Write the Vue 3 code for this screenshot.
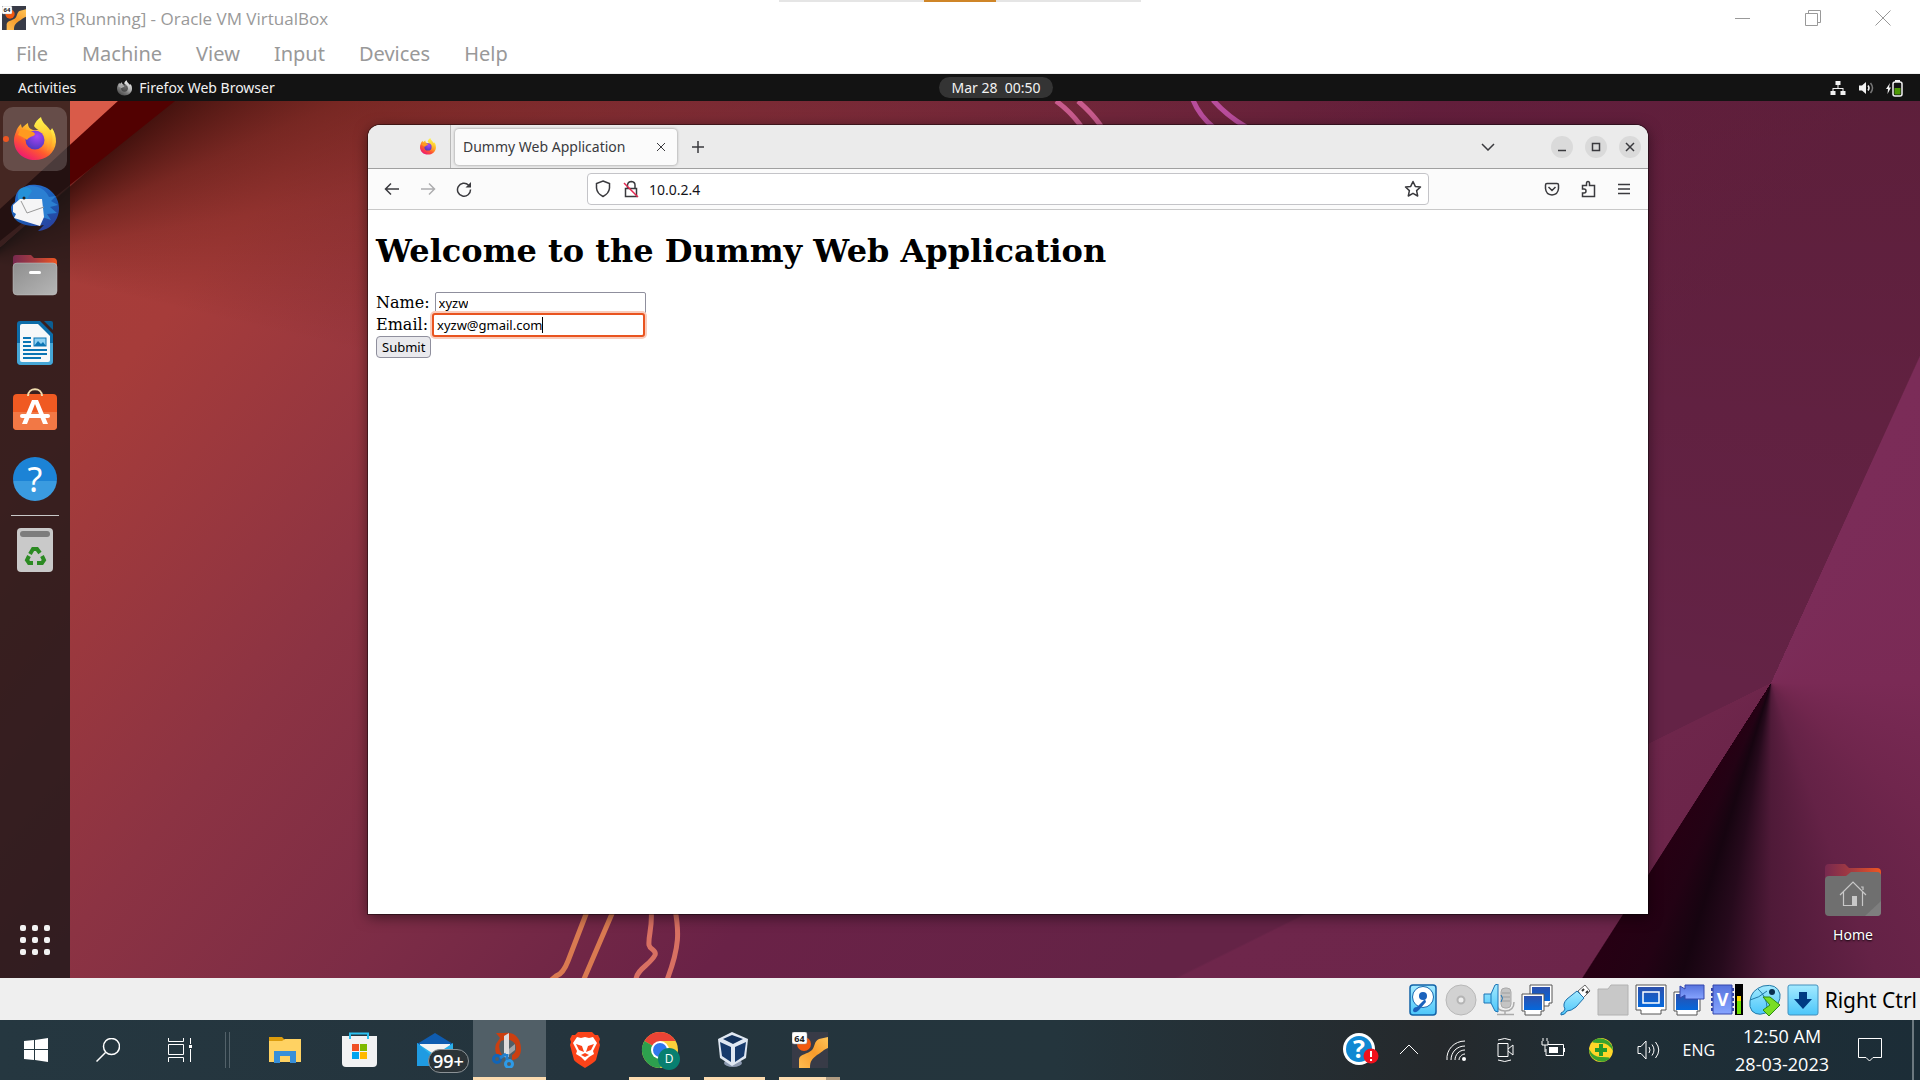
<script setup>
import { ref } from 'vue'

const menus = ['File', 'Machine', 'View', 'Input', 'Devices', 'Help']
const name = ref('xyzw')
const email = ref('xyzw@gmail.com')
const url = ref('10.0.2.4')
</script>

<template>
  <div class="screen">
    <svg class="symbols" aria-hidden="true">
      <defs>
        <linearGradient id="ffBody" x1="0.85" y1="0.1" x2="0.25" y2="0.95">
          <stop offset="0" stop-color="#fff24a" />
          <stop offset="0.35" stop-color="#ffb02a" />
          <stop offset="0.65" stop-color="#ff5a2e" />
          <stop offset="1" stop-color="#ee1a70" />
        </linearGradient>
        <linearGradient id="ffFlame" x1="0.4" y1="0" x2="0.5" y2="1">
          <stop offset="0" stop-color="#fff44f" />
          <stop offset="0.6" stop-color="#ffc830" />
          <stop offset="1" stop-color="#ff8a2a" />
        </linearGradient>
        <radialGradient id="ffGlobe" cx="0.6" cy="0.3" r="0.8">
          <stop offset="0" stop-color="#a645f5" />
          <stop offset="1" stop-color="#4636b8" />
        </radialGradient>
        <linearGradient id="tb" x1="0.2" y1="0" x2="0.8" y2="1">
          <stop offset="0" stop-color="#2d6fd0" />
          <stop offset="0.5" stop-color="#1a5fb8" />
          <stop offset="1" stop-color="#2b3f9c" />
        </linearGradient>
        <linearGradient id="folderBack" x1="0" y1="0" x2="1" y2="0">
          <stop offset="0" stop-color="#77294f" />
          <stop offset="0.5" stop-color="#a83c40" />
          <stop offset="1" stop-color="#ee5622" />
        </linearGradient>
        <linearGradient id="grey" x1="0" y1="0" x2="1" y2="1">
          <stop offset="0" stop-color="#8e8e8e" />
          <stop offset="1" stop-color="#b6b6b6" />
        </linearGradient>
        <linearGradient id="sky" x1="0" y1="0" x2="0" y2="1">
          <stop offset="0" stop-color="#a4eaff" />
          <stop offset="1" stop-color="#4cc6fa" />
        </linearGradient>
        <linearGradient id="deep" x1="0" y1="0" x2="0" y2="1">
          <stop offset="0" stop-color="#2c50ac" />
          <stop offset="1" stop-color="#0468dc" />
        </linearGradient>
        <linearGradient id="violet" x1="0" y1="0" x2="0" y2="1">
          <stop offset="0" stop-color="#5673dd" />
          <stop offset="1" stop-color="#86a4ff" />
        </linearGradient>
        <linearGradient id="amber" x1="1" y1="0" x2="0" y2="1">
          <stop offset="0" stop-color="#ffc558" />
          <stop offset="0.5" stop-color="#f79b2b" />
          <stop offset="1" stop-color="#ffbd52" />
        </linearGradient>
        <symbol id="firefox" viewBox="0 0 42 44">
          <path d="M2 15 C3 11 5 9 7 7 C7 9 8 10 8 11 C10 9 12 7 14 6 C14 10 16 12 19 13 L33 13 C37 15 38 11 38 11 C41 15 42 20 42 25 C41 36 32 43 21 43 C9 43 0 35 0 23 C0 20 1 17 2 15Z" fill="url(#ffBody)" />
          <path d="M20 9 C21 5 24 2 27 0 C28 6 33 8 36 13 C40 19 39 30 33 34 C35 27 34 21 30 16 C27 13 22 13 20 9Z" fill="url(#ffFlame)" />
          <circle cx="21" cy="23" r="9.5" fill="url(#ffGlobe)" />
          <path d="M6 13 C11 12 14 13 19 15 C21 16 22 18 19 19 C16 20 14 21 13 23 C11 21 7 19 4 18Z" fill="#ff9a1f" />
        </symbol>
        <symbol id="vm64" viewBox="0 0 36 36">
          <rect width="36" height="36" fill="#383b47" />
          <circle cx="12" cy="12" r="7" fill="#f2590f" />
          <path d="M36 5 L27 7 C22 9 23 15 20 18 C16 22 8 22 7 27 V36 H18 C18 29 20 27 25 23 C30 20 31 18 36 16Z" fill="url(#amber)" />
          <rect width="15" height="12" rx="2" fill="#fff" stroke="#9a9a9a" stroke-width="0.5" />
          <text x="7.5" y="9.5" font-size="9" font-weight="700" text-anchor="middle" font-family="Open Sans, sans-serif" fill="#222">64</text>
        </symbol>
      </defs>
    </svg>

    <header class="host-title">
      <svg class="app-icon" viewBox="0 0 36 36"><use href="#vm64" /></svg>
      <span class="title-text">vm3 [Running] - Oracle VM VirtualBox</span>
      <div class="win-controls">
        <button aria-label="Minimize"><svg width="16" height="16" viewBox="0 0 16 16"><path d="M0 8.500H15" /></svg></button>
        <button aria-label="Restore"><svg width="16" height="16" viewBox="0 0 16 16"><path d="M.5 3.500H12.500V15.500H.5ZM3.500 3.500V.5H15.500V12.500H12.500" /></svg></button>
        <button aria-label="Close"><svg width="16" height="16" viewBox="0 0 16 16"><path d="M.5 .5L15.500 15.500M15.500 .5L.5 15.500" /></svg></button>
      </div>
      <div class="mini-toolbar"><i></i></div>
    </header>
    <nav class="host-menu">
      <button v-for="m in menus" :key="m">{{ m }}</button>
    </nav>

    <div class="gnome-bar">
      <div class="bar-left">
        <button>Activities</button>
        <button class="bar-app"><svg class="mono" width="15" height="16"><use href="#firefox" /></svg>Firefox Web Browser</button>
      </div>
      <button class="clock">Mar 28&nbsp; 00:50</button>
      <div class="bar-right">
        <svg width="16" height="16" viewBox="0 0 16 16" fill="#f2f2f2"><path d="M5.500 1h5v4h-2v3h5v3h2v4h-5v-4h2v-2h-9v2h2v4h-5v-4h2V8h5V5h-2z" /></svg>
        <svg width="16" height="16" viewBox="0 0 16 16"><path d="M1 5.500h3L8 2v12l-4-3.500H1z" fill="#f2f2f2" /><path d="M10 5.500q2 2.500 0 5" fill="none" stroke="#f2f2f2" stroke-width="1.500" /><path d="M12.500 3q4 5 0 10" fill="none" stroke="#777" stroke-width="1.500" /></svg>
        <svg width="18" height="18" viewBox="0 0 18 18"><path d="M4 4L0 10h2l-.5 5L5 8.500H3z" fill="#f2f2f2" /><rect x="7" y="3" width="9" height="14" rx="2" fill="none" stroke="#f2f2f2" stroke-width="1.500" /><path d="M9 1h5v2H9z" fill="#f2f2f2" /><path d="M8.500 9h6v6.500h-6z" fill="#4e9a06" /></svg>
      </div>
    </div>

    <main class="desktop">
      <svg class="wallpaper" viewBox="0 0 1920 877" preserveAspectRatio="none" aria-hidden="true">
        <path d="M0 0H118L0 108Z" fill="#d95b49" />
        <path d="M118 0H175L0 140V108Z" fill="#520101" />
        <g fill="none" stroke-width="5">
          <path d="M1056 0Q1070 10 1081 25M1078 0Q1092 12 1101 25" stroke="#c85b8d" />
          <path d="M1193 -1Q1199 14 1213 26M1213 -1Q1226 14 1246 26" stroke="#b84d9c" />
          <path d="M588 808L568 860Q563 873 556 875L550 880M614 808L584 878" stroke="#d97a51" />
          <path d="M651 808C653 825 648 835 649 844C650 849 657 849 655 854C650 864 637 868 636 878M675 808C679 830 680 845 667 879" stroke="#d87062" />
        </g>
      </svg>
      <aside class="dock">
        <button class="dock-item running" aria-label="Firefox"><svg width="42" height="44"><use href="#firefox" /></svg></button>
        <button class="dock-item" aria-label="Thunderbird">
          <svg width="48" height="48" viewBox="0 -1 48 48">
            <path d="M8 6C14 2 18 0 26 1C38 2 48 12 48 24C48 36 40 46 27 47L33 41C20 44 9 40 5 36C1 32 0 27 0 23C1 20 3 19 4 18C4 12 6 8 8 6Z" fill="url(#tb)" />
            <path d="M14 3C22 0 34 3 38 13L45 12L40 17L47 21L39 23L46 29L36 30L40 36L31 33L30 16L12 16Z" fill="#2b7fd2" />
            <path d="M9 5C14 2 19 3 21 7L16 15L9 21C6 15 6 9 9 5Z" fill="#2491d8" />
            <path d="M2 21L9 15L31 15L33 33L29 42L3 34L5 30L2 28Z" fill="#f5f5f6" />
            <path d="M10 17L16 29L33 23" fill="none" stroke="#999" />
            <circle cx="13" cy="14" r="1.500" fill="#222" />
          </svg>
        </button>
        <button class="dock-item" aria-label="Files">
          <svg width="46" height="42" viewBox="0 0 46 42">
            <path d="M1 10V4Q1 1 4 1H19L22 4H41Q45 4 45 8V14H1Z" fill="url(#folderBack)" />
            <rect x="1" y="9" width="44" height="32" rx="4" fill="url(#grey)" stroke="#c4c4c4" stroke-width="0.5" />
            <rect x="17" y="17" width="12" height="3" rx="1.500" fill="#fff" />
          </svg>
        </button>
        <button class="dock-item" aria-label="Writer">
          <svg width="36" height="46" viewBox="0 0 36 46">
            <path d="M3 1H23L36 14V41Q36 45 32 45H4Q0 45 0 41V4Q0 1 3 1Z" fill="#0d6ca8" />
            <path d="M0 23H36V41Q36 45 32 45H4Q0 45 0 41Z" fill="#46a6d6" />
            <path d="M3 6Q3 4 5 4H21L33 16V40Q33 42 31 42H5Q3 42 3 40Z" fill="#f7f8f9" />
            <path d="M27 1H34Q36 1 36 3V10Z" fill="#0c5d92" />
            <path d="M6 18H14M6 22H14M6 26H14M6 30H30M6 34H30M6 38H24" stroke="#0c75b4" stroke-width="2" />
            <rect x="17" y="18" width="12" height="8" fill="#8fd0f2" stroke="#0c75b4" />
            <path d="M17 26L21 21L24 24L26 22L29 26Z" fill="#0c75b4" />
          </svg>
        </button>
        <button class="dock-item" aria-label="Ubuntu Software">
          <svg width="46" height="46" viewBox="0 2 46 46">
            <rect x="1" y="8" width="44" height="36" rx="4" fill="#f05a22" />
            <path d="M1 26H45V40Q45 44 41 44H5Q1 44 1 40Z" fill="#f27845" />
            <path d="M16 10C16 1 30 1 30 10" fill="none" stroke="#f0dcae" stroke-width="2" />
            <path d="M10 30H36" stroke="#fff" stroke-width="4" stroke-linecap="round" />
            <path d="M10 38L20 14H26L36 38H31L23 18L15 38Z" fill="#fff" />
          </svg>
        </button>
        <button class="dock-item help" aria-label="Help"><span>?</span></button>
        <hr class="dock-rule" />
        <button class="dock-item trash" aria-label="Trash">
          <svg width="36" height="46" viewBox="0 0 36 46">
            <rect y="1" width="36" height="44" rx="4" fill="#c9c9c9" />
            <rect x="3" y="4" width="30" height="6" rx="3" fill="#7d7d7d" />
            <g fill="none" stroke="#2b8a22" stroke-width="4">
              <path d="M13 27L16 22H20L23 26" /><path d="M25 29L27 33L25 36H20" /><path d="M16 36H12L10 33L12 29" />
            </g>
          </svg>
        </button>
        <button class="app-grid" aria-label="Show Applications"><i v-for="n in 9" :key="n"></i></button>
      </aside>

      <section class="browser">
        <div class="tabs">
          <div class="pinned"><svg width="16" height="17"><use href="#firefox" /></svg></div>
          <div class="tab">
            <span>Dummy Web Application</span>
            <button aria-label="Close tab"><svg width="10" height="10" viewBox="0 0 10 10"><path d="M1 1L9 9M9 1L1 9" /></svg></button>
          </div>
          <button class="new-tab" aria-label="New tab"><svg width="14" height="14" viewBox="0 0 14 14"><path d="M7 1V13M1 7H13" /></svg></button>
          <button class="list-tabs" aria-label="List all tabs"><svg width="14" height="8" viewBox="0 0 14 8"><path d="M1 1L7 7L13 1" /></svg></button>
          <div class="circles">
            <button aria-label="Minimize"><svg width="10" height="10" viewBox="0 0 10 10"><path d="M1 8.500H9" /></svg></button>
            <button aria-label="Maximize"><svg width="10" height="10" viewBox="0 0 10 10"><path d="M1.500 1.500H8.500V8.500H1.500Z" /></svg></button>
            <button aria-label="Close"><svg width="10" height="10" viewBox="0 0 10 10"><path d="M1 1L9 9M9 1L1 9" /></svg></button>
          </div>
        </div>
        <div class="toolbar">
          <div class="nav">
            <button aria-label="Back"><svg width="16" height="16" viewBox="0 0 16 16"><path d="M15 8H1.500M7 2.500L1.500 8L7 13.500" /></svg></button>
            <button aria-label="Forward" class="off"><svg width="16" height="16" viewBox="0 0 16 16"><path d="M1 8H14.500M9 2.500L14.500 8L9 13.500" /></svg></button>
            <button aria-label="Reload"><svg width="16" height="16" viewBox="0 0 16 16"><path d="M14.500 8.500A6.500 6.500 0 1 1 12.500 4" /><path d="M15 1V6.500H9.500Z" fill="#3a3a3e" stroke="none" /></svg></button>
          </div>
          <div class="url-box">
            <svg width="16" height="18" viewBox="0 0 16 18"><path d="M8 1L14.500 3.500V8Q14 13.500 8 16.500Q2 13.500 1.500 8V3.500Z" /></svg>
            <svg width="16" height="18" viewBox="0 0 16 18"><path d="M2.500 8.500H13.500V16.500H2.500ZM4.500 8V5Q5 1.500 8.500 1.500Q12 2 12 5V8" /><path d="M1 3L15 17" stroke="#e22850" /></svg>
            <input v-model="url" aria-label="Address" />
            <svg width="18" height="18" viewBox="0 0 18 18"><path d="M9 1.500L11.300 6.400L16.500 7L12.600 10.600L13.700 16L9 13.300L4.300 16L5.400 10.600L1.500 7L6.700 6.400Z" stroke-linejoin="round" /></svg>
          </div>
          <div class="tools">
            <button aria-label="Pocket"><svg width="16" height="16" viewBox="0 0 16 16"><path d="M3 2.500H13Q14.500 2.500 14.500 4V7.500Q14 13.500 8 14Q2 13.500 1.500 7.500V4Q1.500 2.500 3 2.500ZM4.500 6L8 9.500L11.500 6" /></svg></button>
            <button aria-label="Extensions"><svg width="16" height="18" viewBox="0 0 16 18"><path d="M2.500 5.500H6.500V3.500Q6.500 1.500 8 1.500Q9.500 1.500 9.500 3.500V5.500H14.500V16.500H2.500V13H4Q6 13 6 11Q6 9 4 9H2.500Z" /></svg></button>
            <button aria-label="Menu"><svg width="16" height="12" viewBox="0 0 16 12"><path d="M2 1.500H14M2 6H14M2 10.500H14" /></svg></button>
          </div>
        </div>
        <div class="page">
          <h1>Welcome to the Dummy Web Application</h1>
          <form @submit.prevent>
            <div class="row"><label for="name">Name:</label><span class="field"><input id="name" v-model="name" /></span></div>
            <div class="row"><label for="email">Email:</label><span class="field focus"><input id="email" v-model="email" /><i class="caret"></i></span></div>
            <button class="submit">Submit</button>
          </form>
        </div>
      </section>

      <button class="home">
        <svg width="56" height="52" viewBox="0 0 56 52">
          <path d="M0 12V4Q0 0 4 0H20L24 4H52Q56 4 56 8V16H0Z" fill="url(#folderBack)" />
          <path d="M0 16Q0 12 4 12H21L26 8H52Q56 8 56 12V48Q56 52 52 52H4Q0 52 0 48Z" fill="#6f6f6f" />
          <path d="M56 37V48Q56 52 52 52H40Z" fill="#7e7e7e" />
          <path d="M15 31L28 18L41 31M18.500 28V41.500H27M37.500 28V42M36 23H38V26" fill="none" stroke="#c8c8c8" stroke-width="1.200" />
          <path d="M27 32H32V42H27Z" fill="#c8c8c8" />
        </svg>
        <span>Home</span>
      </button>
    </main>

    <footer class="vm-status">
      <svg viewBox="0 0 32 32"><rect x="3" y="1" width="26" height="30" rx="3" fill="url(#sky)" stroke="#1263a8" stroke-width="1.500" /><circle cx="16" cy="13" r="10.500" fill="#fff" stroke="#1769b0" /><circle cx="16" cy="12" r="4" fill="#1b62bc" /><path d="M6 27Q6 23 10 23L18 15L19 18L12 26Q8 30 6 27Z" fill="#1b62bc" /></svg>
      <svg viewBox="0 0 32 32"><circle cx="16" cy="16" r="15" fill="#d2d2d2" stroke="#b8b8b8" /><circle cx="16" cy="16" r="3.500" fill="#eee" stroke="#b4b4b4" stroke-width="2" /></svg>
      <svg viewBox="0 0 32 32"><rect x="18" y="4" width="10" height="20" rx="4" fill="#c4c4c4" stroke="#aaa" /><path d="M14 20Q14 27 22 27Q31 27 31 18M22 27V30M14 30.500H31M19 9H27M19 13H27M19 17H27" stroke="#aaa" stroke-width="1.500" fill="none" /><path d="M1 10H8L12 1L15 0V28L12 27L8 19H1Z" fill="url(#sky)" stroke="#1c74b6" /><path d="M8 10V19M18 11Q21 14 18 18" fill="none" stroke="#1c74b6" /></svg>
      <svg viewBox="0 0 32 32"><path d="M9 1H31V19H28V22H12V19H9Z" fill="#fff" stroke="#555" /><rect x="11" y="3" width="18" height="14" fill="url(#deep)" /><path d="M1 10H23V27H20V31H4V27H1Z" fill="#fff" stroke="#555" /><rect x="3" y="12" width="18" height="14" fill="url(#deep)" /></svg>
      <svg viewBox="0 0 32 32"><path d="M19 7L26 1L31 7L24 14Z" fill="#fff" stroke="#666" /><path d="M23 7L25 5M27 9L29 7" stroke="#333" stroke-width="2" /><path d="M2 29Q5 28 6 25Q3 20 8 15L18 7L25 14L17 23Q12 27 8 27Q6 31 2 31Z" fill="url(#sky)" stroke="#1c6eaa" /></svg>
      <svg viewBox="0 0 32 32"><path d="M1 5H11L14 1H31V31H1Z" fill="#c8c8c8" stroke="#b2b2b2" /></svg>
      <svg viewBox="0 0 32 32"><path d="M1 1H31V26H26V30H6V26H1Z" fill="#fff" stroke="#555" /><rect x="3" y="3" width="26" height="20" fill="url(#deep)" /><rect x="8" y="8" width="16" height="11" fill="none" stroke="#fff" stroke-width="1.500" /></svg>
      <svg viewBox="0 0 32 32"><path d="M1 8H27V27H24V31H4V27H1Z" fill="#fff" stroke="#555" /><rect x="3" y="10" width="22" height="16" fill="url(#deep)" /><path d="M12 1H31V15H12V11L7 14V2L12 5Z" fill="url(#violet)" stroke="#3446ac" /></svg>
      <svg viewBox="0 0 32 32"><path d="M2 1H21V30H2Z" fill="url(#violet)" stroke="#3446ac" /><path d="M1 4V29M22 4V29" stroke="#3446ac" stroke-width="2" stroke-dasharray="3 2" /><text x="11.500" y="22" text-anchor="middle" font-size="18" font-weight="700" font-family="Open Sans, sans-serif" fill="#fff">V</text><rect x="25" y="1" width="6" height="29" fill="#000" stroke="#000" stroke-width="2" /><rect x="26" y="12" width="4" height="9" fill="#ffd800" /><rect x="26" y="17" width="4" height="13" fill="#6de000" /></svg>
      <svg viewBox="0 0 32 32"><path d="M1 17Q2 6 14 2Q28 -1 31 10Q32 20 22 26Q10 34 3 27Q0 23 1 17Z" fill="url(#sky)" stroke="#2379a8" /><path d="M9 5Q18 13 18 24M1 16Q10 14 18 7" fill="none" stroke="#2379a8" /><circle cx="23" cy="8" r="3" fill="#0a3050" /><path d="M14 13H21L31 21L20 32L14 26L21 21Z" fill="#7ade25" stroke="#2c8b14" /></svg>
      <svg viewBox="0 0 32 32"><rect x="1" y="1" width="30" height="30" rx="2" fill="url(#sky)" stroke="#4390bd" /><path d="M12 8H20V15H25L16 25L7 15H12Z" fill="#003b83" /></svg>
      <span>Right Ctrl</span>
    </footer>

    <footer class="taskbar">
      <div class="system-buttons">
        <button aria-label="Start"><svg width="24" height="24" viewBox="0 0 24 24" fill="#fff"><path d="M0 3L10 2V11H0ZM11 2L24 0V11H11ZM0 12H10V22L0 21ZM11 12H24V24L11 22Z" /></svg></button>
        <button aria-label="Search"><svg width="24" height="24" viewBox="0 0 24 24" fill="none" stroke="#fff" stroke-width="1.500"><circle cx="15.500" cy="8.500" r="8" /><path d="M9.500 14.500L.5 23.500" /></svg></button>
        <button aria-label="Task View"><svg width="24" height="24" viewBox="0 0 24 24" fill="none" stroke="#fff"><path d="M.5 0V3.500H15.500V0M.5 6.500H15.500V16.500H.5ZM.5 24V19.500H15.500V24M22.500 0V6M22.500 11V24" /><path d="M21 7H24V10H21Z" fill="#fff" stroke="none" /></svg></button>
      </div>
      <div class="grip"></div>
      <div class="apps">
        <button aria-label="File Explorer"><svg width="32" height="28" viewBox="0 0 32 28"><path d="M0 6V1H13L16 4H32V26H0Z" fill="#dc9c0c" /><path d="M0 5H13L16 3H32V26H0Z" fill="#ffd262" /><path d="M5 27V15H27V27H21V20H11V27Z" fill="#388fd8" /></svg></button>
        <button aria-label="Microsoft Store"><svg width="36" height="36" viewBox="1 0 36 36"><path d="M9 7V1.500H27V7" fill="none" stroke="#2bc0ef" stroke-width="2" /><path d="M1 4H36V31Q36 35 32 35H5Q1 35 1 31Z" fill="#f2f2f3" /><path d="M9 7V4M27 7V4" stroke="#2bc0ef" stroke-width="2" /><path d="M11 12H18V19H11Z" fill="#f04f24" /><path d="M19 12H26V19H19Z" fill="#7fba00" /><path d="M11 20H18V27H11Z" fill="#00a3ef" /><path d="M19 20H26V27H19Z" fill="#ffb900" /></svg></button>
        <button class="mail" aria-label="Mail"><svg width="36" height="36" viewBox="0 0 36 36"><path d="M0 12L18 1L36 12V20H0Z" fill="#0f5cb0" /><path d="M3 12H33V24H3Z" fill="#f4f4f4" /><path d="M0 11L18 23L36 11V34H0Z" fill="#2bb0ea" /><path d="M0 11L26 34H0Z" fill="#1f9be2" /></svg><span class="badge">99+</span></button>
        <button class="active" aria-label="Snip"><svg width="36" height="36" viewBox="0 0 36 36"><path d="M4 1H12C22 -1 29 6 29 17C29 24 25 28 20 28V23C24 21 25 16 23 12C20 7 14 7 9 9Q5 15 10 23H5Q2 18 4 12L8 6Z" fill="#cb3f10" /><path d="M23 12V18L13 26L12 21Z" fill="#9fa4a8" /><path d="M12 4L17 1V25H12Z" fill="#dcdcde" /><g fill="none" stroke-width="3"><circle cx="5" cy="27" r="3.500" stroke="#1165b8" /><circle cx="17" cy="32" r="3.500" stroke="#2d9be8" /><path d="M8 26L14 22M15 22V28" stroke="#2080d0" /></g></svg></button>
        <button aria-label="Brave"><svg width="32" height="36" viewBox="0 0 32 36"><path d="M9 0H23L26 3L29 3L31 7L30 10L31 13L27 28Q26 30 16 36Q6 30 5 28L1 13L2 10L1 7L3 3L6 3Z" fill="#fb4319" /><path d="M8 5L12 6L16 5L20 6L24 5L28 11L24 19L25 22L20 25L16 29L12 25L7 22L8 19L4 11Z" fill="#fff" /><path d="M7 12L13 14L15 20L10 18ZM25 12L19 14L17 20L22 18ZM12 23L16 21L20 23L16 25Z" fill="#fb4319" /></svg></button>
        <button class="open" aria-label="Chrome"><svg width="40" height="40" viewBox="0 0 40 40"><circle cx="20" cy="20" r="18" fill="#fdd13b" /><path d="M20 20L4.400 11A18 18 0 0 1 35.600 11H20Z" fill="#ea4335" /><path d="M20 20L4.400 11A18 18 0 0 0 20 38L27 24Z" fill="#2da04e" /><circle cx="20" cy="20" r="9" fill="#fff" /><circle cx="20" cy="20" r="7" fill="#2f78ed" /><circle cx="29" cy="29" r="11" fill="#087f70" /><text x="29" y="33" font-size="12" text-anchor="middle" font-family="Open Sans, sans-serif" fill="#fff">D</text></svg></button>
        <button class="open" aria-label="VirtualBox"><svg width="36" height="36" viewBox="0 0 36 36"><ellipse cx="16" cy="31" rx="9" ry="4" fill="#8d9ab0" /><path d="M1 7L15 0L31 7L29 26L15 34L3 26Z" fill="#dfe7f2" /><path d="M6 7L15 3L26 7L16 12Z" fill="#12315c" /><path d="M3 10L14 15V30L5 24ZM29 10L18 15V30L27 24Z" fill="#173a6c" /></svg></button>
        <button class="open stacked" aria-label="vm3"><svg width="36" height="36"><use href="#vm64" /></svg></button>
      </div>
      <div class="tray">
        <svg class="help-tray" width="36" height="36" viewBox="0 0 36 36"><circle cx="16" cy="17" r="16" fill="#fff" /><circle cx="16" cy="17" r="13" fill="#1088d2" /><text x="16" y="26" font-size="25" font-weight="700" text-anchor="middle" font-family="Open Sans, sans-serif" fill="#fff">?</text><circle cx="28" cy="24" r="7.500" fill="#f0101c" /><path d="M28 19V25M28 27V29" stroke="#fff" stroke-width="2" /></svg>
        <svg viewBox="0 0 24 24"><path d="M3 16L12 7L21 16" /></svg>
        <svg viewBox="0 0 24 24"><path d="M2 22C1 12 9 3 20 3M6 22C6 14 12 8 20 8M10 22C10 17 14 12 20 12M14 22C14 19 17 16 20 16" /><circle cx="19" cy="21" r="2" fill="#fff" stroke="none" /></svg>
        <svg viewBox="0 0 24 24"><path d="M5 5.500H15V18.500H5ZM15 11L20 7V17L15 13M5 2Q12 -1 18 2M5 22Q12 25 18 22" /></svg>
        <svg viewBox="0 0 24 24"><path d="M7 6.500H22.500V17.500H5V11M23.500 10V14M1 3V7H7V3M2 0V3M6 0V3M4 7V14" /><path d="M8 9H17V15H8Z" fill="#fff" stroke="none" /></svg>
        <svg viewBox="0 0 24 24"><circle cx="12" cy="12" r="12" fill="#ffd629" stroke="none" /><path d="M3 4Q10 -3 19 3Q24 7 24 13Q19 4 11 5Q5 5 3 4ZM21 20Q14 27 5 21Q0 17 0 11Q5 20 13 19Q19 19 21 20Z" fill="#3ba32e" stroke="none" /><path d="M12 6V18M6 12H18" stroke="#259a2b" stroke-width="4" /></svg>
        <svg viewBox="0 0 24 24"><path d="M1 8.500H4L9 3V21L4 15.500H1ZM12 9Q14 12 12 15M15 6.500Q19 12 15 17.500M18.500 4Q25 12 18.500 20" /></svg>
        <span class="lang">ENG</span>
        <div class="datetime"><span>12:50 AM</span><span>28-03-2023</span></div>
        <svg class="notif" viewBox="0 0 24 24"><path d="M.5 .5H23.500V19.500H15L11.500 23L8 19.500H.5Z" /></svg>
        <i class="peek"></i>
      </div>
    </footer>
  </div>
</template>

<style>
body { margin: 0; background: #fff; }
</style>

<style scoped>
* { box-sizing: border-box; }
.screen { min-height: 100vh; display: flex; flex-direction: column; overflow: hidden; font-family: "Noto Sans", sans-serif; }
.symbols { position: absolute; width: 0; height: 0; }
button { border: 0; padding: 0; margin: 0; background: none; font: inherit; color: inherit; display: flex; align-items: center; justify-content: center; }
svg { flex: none; display: block; }

.host-title { position: relative; height: 36px; display: flex; align-items: center; gap: 5px; padding-left: 2px; color: #999; font-family: "Open Sans", sans-serif; font-size: 17px; }
.app-icon { width: 24px; height: 24px; }
.win-controls { margin-left: auto; margin-right: 2px; display: flex; }
.win-controls button { width: 70px; height: 34px; }
.win-controls svg { fill: none; stroke: #999; }
.mini-toolbar { position: absolute; top: 0; left: calc(41% - 8px); width: 362px; height: 2px; background: #e5e5e5; display: flex; justify-content: center; }
.mini-toolbar i { width: 72px; background: #cf8528; }
.host-menu { height: 38px; display: flex; align-items: center; gap: 34px; padding: 0 0 2px 16px; color: #999; font-size: 20px; border-bottom: 1px solid #f0f0f0; }

.gnome-bar { height: 27px; display: grid; grid-template-columns: 1fr auto 1fr; align-items: center; padding: 0 16px 0 18px; background: #131313; color: #f2f2f2; font-size: 14px; }
.bar-left { display: flex; gap: 41px; }
.bar-app { gap: 7px; }
.mono { filter: grayscale(1); }
.clock { height: 21px; padding: 0 12px; border-radius: 11px; background: #343434; margin-left: 70px; }
.bar-right { display: flex; justify-content: flex-end; align-items: center; gap: 12px; }

.desktop { flex: 1; position: relative; display: flex;
  background:
    conic-gradient(from 0deg at 92.24% 66.36%, transparent 24.4deg, #7b2c58 24.6deg, #7a2a55 90deg, #70264d 130deg, #642246 160deg, #4f1a38 180deg, #260a1c 190deg, #160410 197deg, #230214 204deg, #260013 212.5deg, #6c254a 212.7deg, #6e264b 243.500deg, transparent 243.700deg),
    conic-gradient(from 0deg at -15px 160px, transparent 48deg, rgba(36, 4, 0, 0.76) 49deg, rgba(50, 8, 0, 0.4) 66deg, rgba(60, 10, 0, 0.2) 80deg, transparent 104deg),
    linear-gradient(130deg, #a83d37 0%, #a63c3a 13%, #8c3343 29%, #7c2c46 41%, #702646 49%, #6a2247 54%, #642346 71%, #642346 100%);
}
.wallpaper { position: absolute; inset: 0; width: 100%; height: 100%; }
.dock { position: relative; width: 70px; background: rgba(22, 22, 22, 0.76); display: flex; flex-direction: column; align-items: center; padding: 6px 0 20px; }
.dock-item { position: relative; width: 64px; height: 64px; margin-bottom: 4px; border-radius: 10px; }
.running { background: rgba(255, 255, 255, 0.18); }
.running::before { content: ""; position: absolute; left: 0; top: 29px; width: 6px; height: 6px; border-radius: 50%; background: #ee5622; }
.help span { width: 44px; height: 44px; border-radius: 50%; background: linear-gradient(#1c83d6 54%, #3a9be0 54%); color: #fff; font-size: 34px; line-height: 44px; }
.dock-rule { width: 48px; height: 1px; border: 0; margin: 0; background: #c8c8c8; }
.trash { margin-top: 2px; }
.app-grid { margin-top: auto; display: grid; grid-template-columns: repeat(3, 6px); gap: 6px; padding: 3px; }
.app-grid i { width: 6px; height: 6px; border-radius: 2px; background: #f2f2f2; }

.browser { position: absolute; left: 368px; right: 272px; top: 24px; bottom: 64px; display: flex; flex-direction: column; background: #fff; border-radius: 12px 12px 0 0; box-shadow: 0 0 0 1px rgba(0, 0, 0, 0.4), 0 3px 14px rgba(0, 0, 0, 0.5); overflow: hidden; }
.browser svg { fill: none; stroke: #3a3a3e; stroke-width: 1.500px; }
.tabs { height: 44px; display: flex; align-items: center; background: #ebebeb; border-bottom: 1px solid #a0a0a0; }
.pinned { width: 83px; height: 43px; border-right: 1px solid #b8b8b8; display: flex; align-items: center; justify-content: flex-end; padding-right: 14px; }
.pinned svg { stroke: none; }
.tab { width: 222px; height: 36px; margin: 0 14px 0 4px; padding: 0 11px 0 8px; border-radius: 4px; background: #fbfbfb; box-shadow: 0 0 3px rgba(0, 0, 0, 0.4); display: flex; align-items: center; justify-content: space-between; font-size: 14px; color: #3a3a3e; }
.tab svg { stroke-width: 1px; }
.list-tabs { margin-left: auto; }
.circles { display: flex; gap: 12px; padding: 0 7px 0 56px; }
.circles button { width: 22px; height: 22px; border-radius: 50%; background: #dadada; }
.toolbar { height: 41px; display: flex; align-items: center; background: #fbfbfb; border-bottom: 1px solid #c8c8c8; padding: 0 16px; }
.nav { display: flex; gap: 20px; width: 203px; }
.off { opacity: 0.4; }
.url-box { flex: 1; height: 32px; display: flex; align-items: center; gap: 12px; padding: 0 6px 0 7px; border: 1px solid #c4c4c8; border-radius: 4px; background: #fff; }
.url-box input { flex: 1; min-width: 0; border: 0; padding: 0; margin-left: -2px; outline: 0; background: none; font: 14px "Noto Sans", sans-serif; color: #15141a; }
.tools { width: 203px; display: flex; justify-content: flex-end; align-items: center; gap: 20px; }
.page { padding: 23px 8px; font: 16px "DejaVu Serif", serif; color: #000; }
h1 { margin: 0 0 22px; font-size: 32px; line-height: 37px; font-weight: 700; }
.row { display: flex; align-items: center; gap: 5px; height: 22px; line-height: 22px; }
.field { width: 211px; height: 22px; display: flex; align-items: center; padding: 2px 3px; border: 1px solid #8f8f9d; border-radius: 2px; background: #fff; }
.field input { field-sizing: content; border: 0; padding: 0; outline: 0; background: none; font: 13px "Noto Sans", sans-serif; color: #000; }
.focus { position: relative; width: 213px; height: 24px; margin-left: -1px; border: 2px solid #e95420; border-radius: 3px; box-shadow: 0 0 0 2px #f9cdbd; }
.caret { width: 1px; height: 16px; background: #000; }
.submit { height: 22px; padding: 0 5px; border: 1px solid #8f8f9d; border-radius: 4px; background: #e9e9ed; font: 13px "Noto Sans", sans-serif; }
.home { position: absolute; right: 39px; bottom: 34px; flex-direction: column; gap: 10px; color: #fff; font-size: 14px; line-height: 18px; text-shadow: 0 1px 2px #000; }

.vm-status { height: 42px; display: flex; align-items: center; justify-content: flex-end; gap: 6px; padding: 2px 3px 0 0; background: #efefef; color: #000; font-size: 21px; }
.vm-status svg { width: 32px; height: 32px; }

.taskbar { height: 60px; display: flex; align-items: stretch; background: linear-gradient(90deg, #253740 0%, #24343d 30%, #24353d 55%, #25292c 75%, #1f2e36 84%, #1c2d37 100%); color: #fff; font-family: "Open Sans", sans-serif; }
.system-buttons { display: flex; }
.system-buttons button { width: 72px; }
.grip { width: 5px; height: 36px; margin: 12px 18px 0 9px; border: 1px solid #53626a; border-width: 0 1px; }
.apps { display: flex; gap: 2px; }
.apps button { position: relative; width: 73px; }
.active { background: #515f67; }
.active::after, .open::after { content: ""; position: absolute; left: 6px; right: 6px; bottom: 0; height: 3px; background: #fcdcb0; }
.active::after { left: 0; right: 0; }
.stacked::after { background: linear-gradient(90deg, #fcdcb0 47px, #b09c82 47px); }
.badge { position: absolute; left: 30px; top: 29px; height: 24px; padding: 0 4px; border: 1px solid #8b9296; border-radius: 12px; background: #2b3337; font-size: 18px; font-weight: 600; line-height: 22px; }
.tray { margin-left: auto; display: flex; align-items: center; gap: 24px; }
.tray svg { width: 24px; height: 24px; fill: none; stroke: #fff; overflow: visible; }
.tray .help-tray { width: 36px; height: 36px; margin-right: -6px; stroke: none; }
.lang { font-size: 16px; margin-left: -2px; }
.datetime { display: flex; flex-direction: column; align-items: center; font-size: 18px; line-height: 28px; margin-left: -4px; }
.notif { margin: 0 6px 0 5px; }
.peek { width: 2px; align-self: stretch; background: #6c787f; margin: 0 6px 0 0; }
</style>
